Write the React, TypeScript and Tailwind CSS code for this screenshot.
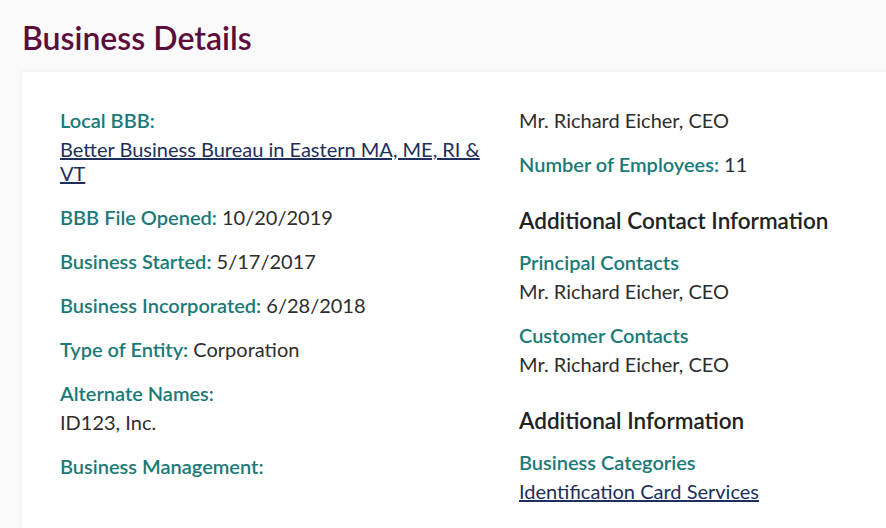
import React from "react";

const Label = ({ children }: { children: React.ReactNode }) => (
  <span className="font-semibold text-[#1a7a78]">{children}</span>
);

export default function App() {
  return (
    <div className="w-[886px] h-[528px] overflow-hidden bg-[#fafafa] font-['Lato',sans-serif] text-[20px] leading-[24px] text-[#2d2d2d]">
      <h1 className="pl-[22px] pt-[19px] h-[72px] text-[32px] leading-[38px] font-semibold text-[#5c0d3c]">
        Business Details
      </h1>
      <div className="ml-[22px] w-[920px] h-[500px] bg-white shadow-[0_0_6px_rgba(0,0,0,0.06)] pl-[38px] pt-[36px]">
        <div className="grid grid-cols-[459px_1fr]">
          <div className="flex flex-col gap-[20px] pr-[36px]">
            <div className="flex flex-col gap-[5px]">
              <Label>Local BBB:</Label>
              <a className="underline text-[#1d2f5c]">Better Business Bureau in Eastern MA, ME, RI &amp; VT</a>
            </div>
            <div><Label>BBB File Opened:</Label> 10/20/2019</div>
            <div><Label>Business Started:</Label> 5/17/2017</div>
            <div><Label>Business Incorporated:</Label> 6/28/2018</div>
            <div><Label>Type of Entity:</Label> Corporation</div>
            <div className="flex flex-col gap-[5px]">
              <Label>Alternate Names:</Label>
              <span>ID123, Inc.</span>
            </div>
            <div><Label>Business Management:</Label></div>
          </div>
          <div className="flex flex-col">
            <div>Mr. Richard Eicher, CEO</div>
            <div className="mt-[20px]"><Label>Number of Employees:</Label> 11</div>
            <h2 className="mt-[31px] text-[22.5px] leading-[28px] font-semibold text-[#222]">Additional Contact Information</h2>
            <div className="mt-[15px] flex flex-col gap-[5px]">
              <Label>Principal Contacts</Label>
              <span>Mr. Richard Eicher, CEO</span>
            </div>
            <div className="mt-[20px] flex flex-col gap-[5px]">
              <Label>Customer Contacts</Label>
              <span>Mr. Richard Eicher, CEO</span>
            </div>
            <h2 className="mt-[31px] text-[22.5px] leading-[28px] font-semibold text-[#222]">Additional Information</h2>
            <div className="mt-[15px] flex flex-col gap-[5px]">
              <Label>Business Categories</Label>
              <a className="underline text-[#1d2f5c]">Identification Card Services</a>
            </div>
          </div>
        </div>
      </div>
    </div>
  );
}
